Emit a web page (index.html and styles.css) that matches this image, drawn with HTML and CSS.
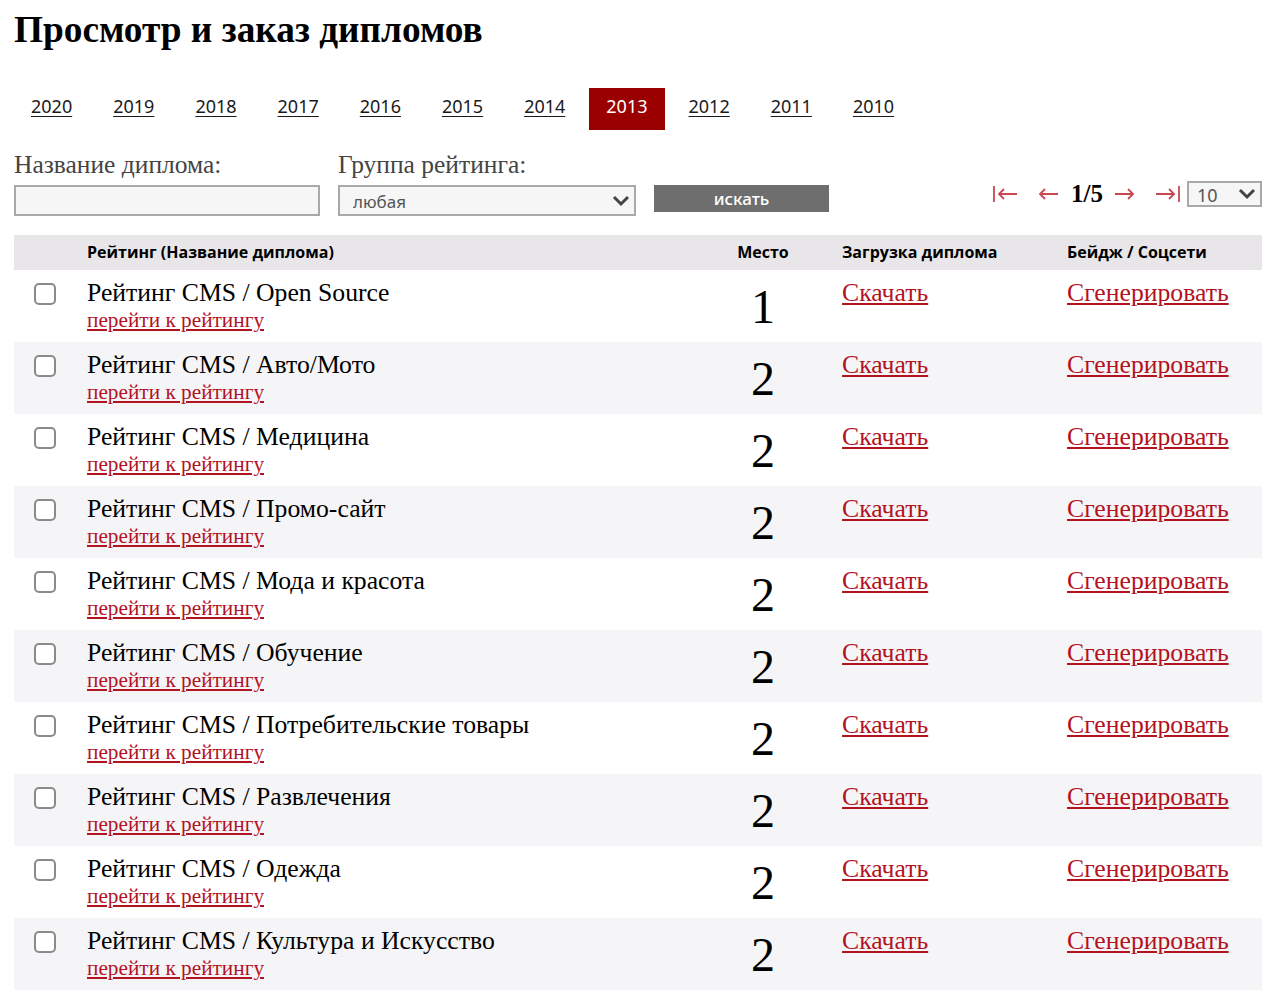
FILE: index.html
```html
<!DOCTYPE html>
<html lang="ru">
<head>
    <meta charset="UTF-8">
    <meta name="viewport" content="width=device-width, initial-scale=1.0">
    <title>Просмотр и заказ дипломов</title>
    <link rel="stylesheet" href="styles.css">
</head>
<body>
    <h1 class="page_title">Просмотр и заказ дипломов</h1>
    <div class="years">
        <a href="#" class="year">2020</a>
        <a href="#" class="year">2019</a>
        <a href="#" class="year">2018</a>
        <a href="#" class="year">2017</a>
        <a href="#" class="year">2016</a>
        <a href="#" class="year">2015</a>
        <a href="#" class="year">2014</a>
        <a href="#" class="year active">2013</a>
        <a href="#" class="year">2012</a>
        <a href="#" class="year">2011</a>
        <a href="#" class="year">2010</a>
    </div>
    <div class="filter">
        <div class="field field_name">
            <label>Название диплома:</label>
            <input type="text" class="text_input">
        </div>
        <div class="field field_group">
            <label>Группа рейтинга:</label>
            <div class="select_wrap">
                <select class="select_box">
                    <option>любая</option>
                </select>
                <svg class="chevron" width="18" height="12" viewBox="0 0 18 12"><path d="M2 2 L9 9 L16 2" fill="none" stroke="#444" stroke-width="3"/></svg>
            </div>
        </div>
        <button class="search_btn">искать</button>
        <div class="pager">
            <a href="#" class="pager_arrow">
                <svg width="26" height="20" viewBox="0 0 26 20"><path d="M2 2 V18 M25 10 H7 M12 5 L7 10 L12 15" fill="none" stroke="#c9474f" stroke-width="1.8"/></svg>
            </a>
            <a href="#" class="pager_arrow">
                <svg width="21" height="20" viewBox="0 0 21 20"><path d="M20 10 H2 M7 5 L2 10 L7 15" fill="none" stroke="#c9474f" stroke-width="1.8"/></svg>
            </a>
            <span class="pager_num">1/5</span>
            <a href="#" class="pager_arrow">
                <svg width="21" height="20" viewBox="0 0 21 20"><path d="M1 10 H19 M14 5 L19 10 L14 15" fill="none" stroke="#c9474f" stroke-width="1.8"/></svg>
            </a>
            <a href="#" class="pager_arrow">
                <svg width="26" height="20" viewBox="0 0 26 20"><path d="M24 2 V18 M1 10 H19 M14 5 L19 10 L14 15" fill="none" stroke="#c9474f" stroke-width="1.8"/></svg>
            </a>
            <div class="select_wrap select_small">
                <select class="select_box">
                    <option>10</option>
                </select>
                <svg class="chevron" width="18" height="12" viewBox="0 0 18 12"><path d="M2 2 L9 9 L16 2" fill="none" stroke="#444" stroke-width="3"/></svg>
            </div>
        </div>
    </div>
    <table class="diplomas">
        <colgroup>
            <col class="c_check">
            <col class="c_name">
            <col class="c_place">
            <col class="c_load">
            <col class="c_social">
        </colgroup>
        <thead>
            <tr>
                <th></th>
                <th>Рейтинг (Название диплома)</th>
                <th class="place_head">Место</th>
                <th class="load_cell">Загрузка диплома</th>
                <th>Бейдж / Соцсети</th>
            </tr>
        </thead>
        <tbody id="rows"></tbody>
    </table>
    <script>
        let rows = [
            ["Open Source", 1],
            ["Авто/Мото", 2],
            ["Медицина", 2],
            ["Промо-сайт", 2],
            ["Мода и красота", 2],
            ["Обучение", 2],
            ["Потребительские товары", 2],
            ["Развлечения", 2],
            ["Одежда", 2],
            ["Культура и Искусство", 2]
        ];
        let $rows = document.querySelector("#rows");
        let html = "";
        for (let i = 0; i < rows.length; i++) {
            html += `<tr>
                <td><input type="checkbox" class="check"></td>
                <td>
                    <div class="name">Рейтинг CMS / ${rows[i][0]}</div>
                    <a href="#" class="go_link">перейти к рейтингу</a>
                </td>
                <td class="place">${rows[i][1]}</td>
                <td class="load_cell"><a href="#" class="big_link">Скачать</a></td>
                <td><a href="#" class="big_link">Сгенерировать</a></td>
            </tr>`;
        }
        $rows.innerHTML = html;
    </script>
</body>
</html>
```

FILE: styles.css
```css
* {
    margin: 0;
    padding: 0;
    box-sizing: border-box;
}
body {
    margin: 0 14px;
    font-family: "Liberation Serif", serif;
    color: #000;
    background: #fff;
}
.page_title {
    margin-top: 8px;
    font-size: 37.3px;
    line-height: 44px;
    font-weight: bold;
}
.years {
    display: flex;
    gap: 7px;
    margin-top: 36px;
}
.year {
    display: block;
    height: 42px;
    padding: 0 17px;
    line-height: 37px;
    font-family: "Noto Sans", sans-serif;
    font-size: 18px;
    color: #1a1a1a;
    text-decoration: underline;
    text-underline-offset: 3px;
}
.year.active {
    background-color: #9b0000;
    color: #fff;
    text-decoration: none;
}
.filter {
    display: flex;
    align-items: flex-end;
    width: 1248px;
    margin-top: 23px;
}
.field label {
    display: block;
    font-size: 25.5px;
    line-height: 24px;
    color: #444;
    margin-bottom: 8px;
}
.field_name {
    width: 306px;
}
.field_group {
    width: 298px;
    margin-left: 18px;
}
.text_input {
    display: block;
    width: 306px;
    height: 31px;
    border: 2px solid #a9a9a9;
    background: #f6f6f6;
}
.select_wrap {
    position: relative;
}
.select_box {
    display: block;
    width: 298px;
    height: 31px;
    appearance: none;
    -webkit-appearance: none;
    border: 2px solid #a9a9a9;
    background: #f6f6f6;
    padding: 2px 0 0 13px;
    font-family: "Noto Sans", sans-serif;
    font-size: 17px;
    color: #555;
}
.chevron {
    position: absolute;
    right: 6px;
    top: 10px;
}
.search_btn {
    width: 175px;
    height: 27px;
    margin-left: 18px;
    margin-bottom: 4px;
    border: none;
    background: #6e6e6e;
    color: #fff;
    font-family: "Noto Sans", sans-serif;
    font-size: 17px;
    font-weight: 500;
    line-height: 27px;
}
.pager {
    display: flex;
    align-items: center;
    margin-left: auto;
    margin-bottom: 8px;
}
.pager_arrow {
    display: flex;
    margin-left: 20px;
}
.pager_arrow:first-child {
    margin-left: 0;
}
.pager_num {
    font-size: 25px;
    font-weight: bold;
    margin: 0 11px 0 12px;
}
.pager_num + .pager_arrow {
    margin-left: 0;
}
.select_small {
    margin-left: 6px;
}
.select_small .select_box {
    width: 75px;
    height: 26px;
    padding: 0 0 0 8px;
    font-size: 18px;
}
.select_small .chevron {
    top: 7px;
}
.diplomas {
    width: 1248px;
    margin-top: 19px;
    border-collapse: collapse;
    table-layout: fixed;
}
.c_check {
    width: 73px;
}
.c_place {
    width: 102px;
}
.c_load {
    width: 253px;
}
.c_social {
    width: 195px;
}
.diplomas th {
    height: 35px;
    background-color: #e8e6e9;
    text-align: left;
    font-family: "Open Sans", sans-serif;
    font-size: 16px;
    font-weight: bold;
    vertical-align: middle;
    padding-bottom: 1px;
}
.diplomas th.place_head {
    text-align: center;
}
.diplomas td {
    height: 72px;
    vertical-align: top;
    padding-top: 9px;
}
.diplomas tbody tr:nth-child(even) td {
    background-color: #f5f5f7;
}
.diplomas .load_cell {
    padding-left: 28px;
}
.check {
    display: block;
    appearance: none;
    -webkit-appearance: none;
    width: 22px;
    height: 22px;
    margin: 4px 0 0 20px;
    border: 2px solid #8a8a8a;
    border-radius: 5px;
    background: #fff;
}
.name {
    font-size: 25.7px;
    line-height: 28px;
}
.go_link {
    display: inline-block;
    margin-top: 2px;
    font-size: 21.3px;
    line-height: 23px;
    color: #b3121f;
}
.place {
    text-align: center;
    font-size: 48px;
    line-height: 56px;
}
.big_link {
    font-size: 25.7px;
    line-height: 28px;
    color: #b3121f;
}
```
